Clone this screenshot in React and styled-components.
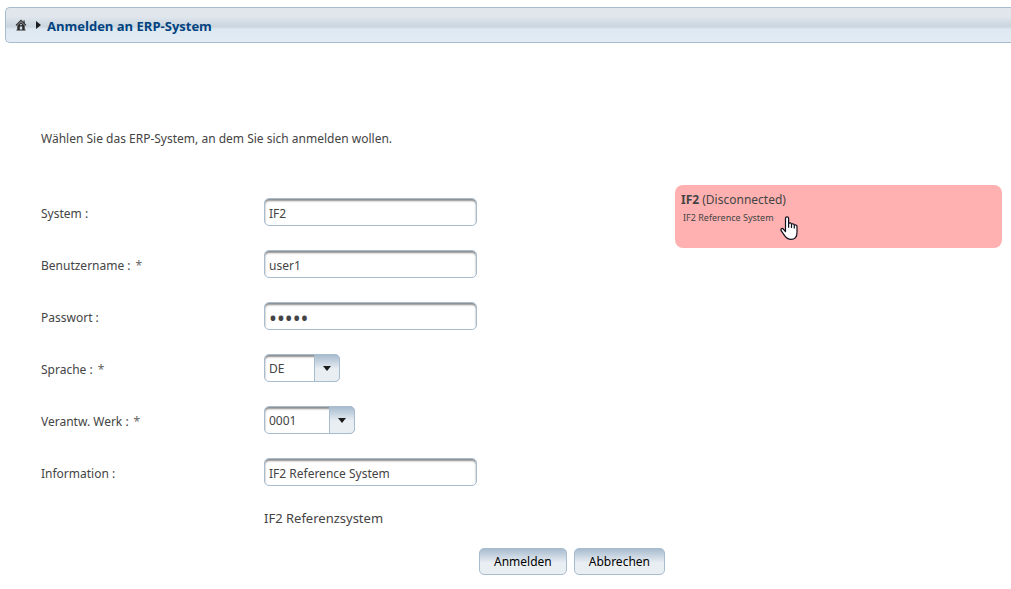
import React from 'react';
import styled, { createGlobalStyle, css } from 'styled-components';

const GlobalStyle = createGlobalStyle`
  *, *::before, *::after {
    box-sizing: border-box;
  }
  body {
    margin: 0;
    background: #ffffff;
    color: #444444;
    font-family: 'Noto Sans', 'Open Sans', sans-serif;
    font-size: 12px;
    line-height: 18px;
  }
  input, select, button {
    font-family: inherit;
    font-size: inherit;
    line-height: inherit;
  }
`;

const Page = styled.div`
  padding: 7px 0 14px 5px;
`;

const Breadcrumb = styled.nav`
  display: flex;
  align-items: center;
  height: 36px;
  padding: 0 9px;
  border: 1px solid #a8bccf;
  border-right: 0;
  border-radius: 5px 0 0 5px;
  background: linear-gradient(to bottom, #e2e7ee 0%, #e0e6ec 25%, #c9d5df 55%, #dde8f1 62%, #e3ecf5 100%);
`;

const HomeLink = styled.a`
  display: flex;
  margin-right: 9px;
`;

const Crumb = styled.h1`
  margin: 0 0 0 6px;
  padding-top: 2px;
  color: #00427f;
  font-family: 'Open Sans', sans-serif;
  font-size: 13px;
  line-height: 18px;
  font-weight: 700;
`;

const Content = styled.main`
  padding: 87px 9px 0 36px;
`;

const Intro = styled.p`
  margin: 0 0 37px;
`;

const Columns = styled.div`
  display: grid;
  grid-template-columns: minmax(0, 624fr) minmax(0, 327fr);
  gap: 10px;
  align-items: start;
`;

const Form = styled.form`
  display: flex;
  flex-direction: column;
  gap: 24px;
  padding-top: 13px;
`;

const Row = styled.div`
  display: grid;
  grid-template-columns: 223px 1fr;
  align-items: center;
  justify-items: start;
`;

const Label = styled.label`
  padding-top: 4px;
`;

const Required = styled.span`
  margin-left: 5px;
  color: #666666;
`;

const fieldBox = css`
  height: 28px;
  margin: 0;
  padding: 2px 4px 0;
  border: 1px solid #a8bccf;
  border-radius: 5px;
  outline: 0;
  background: #ffffff;
  color: #444444;
  box-shadow: inset 0 2px 2px #8c8c8c;
`;

const Input = styled.input`
  ${fieldBox}
  width: 213px;

  &[type='password'] {
    padding-top: 4px;
    font-size: 21px;
  }
`;

const SelectBox = styled.div`
  display: grid;
  width: ${({ $width }) => $width}px;
`;

const Select = styled.select`
  ${fieldBox}
  grid-area: 1 / 1;
  width: 100%;
  padding-right: 28px;
  appearance: none;
`;

const Trigger = styled.span`
  grid-area: 1 / 1;
  justify-self: end;
  display: flex;
  align-items: center;
  justify-content: center;
  width: 26px;
  height: 28px;
  border: 1px solid #a8bccf;
  border-radius: 0 5px 5px 0;
  background: linear-gradient(to bottom, #a8bccf 0%, #e9eef3 55%, #e9eef3 100%);
  pointer-events: none;
`;

const Note = styled.p`
  margin: -1px 0 1px 223px;
  font-size: 13px;
`;

const Actions = styled.div`
  display: flex;
  justify-content: flex-end;
  gap: 7px;
  margin-top: -4px;
`;

const Button = styled.button`
  height: 27px;
  padding: 1px 14px 0;
  border: 1px solid #a8bccf;
  border-radius: 5px;
  background: linear-gradient(to bottom, #a8bccf 0%, #e9eef3 55%, #e9eef3 100%);
  color: #000000;
  cursor: pointer;
`;

const SystemCard = styled.section`
  position: relative;
  height: 63px;
  padding: 6px;
  border-radius: 8px;
  background: #ffb1b1;
`;

const SystemName = styled.h2`
  margin: 0;
  font-size: 12px;
  line-height: 18px;
  font-weight: 400;
`;

const SystemText = styled.p`
  margin: 0;
  padding-left: 2px;
  font-size: 9px;
  line-height: 18px;
`;

const Pointer = styled.svg`
  position: absolute;
  top: 31px;
  left: 105px;
`;

const HomeIcon = () => (
  <svg width="12" height="12" viewBox="0 0 12 12" aria-hidden="true">
    <path d="M1 6.4 6 1.4 11 6.4" fill="none" stroke="#2b2b2b" strokeWidth="1.3" />
    <path d="M8.4 1.5h1.3v3.2L8.4 3.4z" fill="#2b2b2b" />
    <path d="M2.3 6.6 6 3l3.7 3.6V11H7.2V7.6H4.8V11H2.3z" fill="#2b2b2b" />
    <path d="M5.2 5.1h1.6v1.2H5.2z" fill="#c9d2db" />
    <path d="M1.5 11h9" stroke="#2b2b2b" />
  </svg>
);

const HandPointer = () => (
  <Pointer width="18" height="25" viewBox="0 0 18 25" aria-hidden="true">
    <path
      d="M5.5 15.6V2.3C5.5 .3 8.6 .3 8.6 2.3V7.6C9.3 6.4 11.4 6.7 11.5 8.3C12.3 7.3 14.2 7.7 14.3 9.2C15.2 8.4 17 8.9 17 10.6V16.5C17 20.8 14.6 23.4 10.9 23.4C7.6 23.4 6.2 22 4.6 19.7L1.3 14.8C.2 13.1 2 11.8 3.3 13Z"
      fill="#ffffff"
      stroke="#10101c"
      strokeWidth="1.2"
      strokeLinejoin="round"
    />
    <path d="M8.6 7.4v4.4M11.5 8.2v3.8M14.3 9.2V12.4" fill="none" stroke="#10101c" strokeWidth="1.2" />
  </Pointer>
);

const FieldLabel = ({ id, text, required }) => (
  <Label htmlFor={id}>
    {text} :{required && <Required>*</Required>}
  </Label>
);

const TextField = ({ id, label, required, type = 'text', value }) => (
  <Row>
    <FieldLabel id={id} text={label} required={required} />
    <Input id={id} type={type} defaultValue={value} />
  </Row>
);

const SelectField = ({ id, label, required, value, width }) => (
  <Row>
    <FieldLabel id={id} text={label} required={required} />
    <SelectBox $width={width}>
      <Select id={id} defaultValue={value}>
        <option value={value}>{value}</option>
      </Select>
      <Trigger>
        <svg width="8" height="5" viewBox="0 0 8 5" aria-hidden="true">
          <path d="M0 0h8L4 5z" fill="#1c1c1c" />
        </svg>
      </Trigger>
    </SelectBox>
  </Row>
);

const App = () => {
  return (
    <>
      <GlobalStyle />
      <Page>
        <Breadcrumb>
          <HomeLink href="#" aria-label="Home">
            <HomeIcon />
          </HomeLink>
          <svg width="5" height="8" viewBox="0 0 5 8" aria-hidden="true">
            <path d="M0 0l5 4-5 4z" fill="#1c1c1c" />
          </svg>
          <Crumb>Anmelden an ERP-System</Crumb>
        </Breadcrumb>
        <Content>
          <Intro>Wählen Sie das ERP-System, an dem Sie sich anmelden wollen.</Intro>
          <Columns>
            <Form onSubmit={(e) => e.preventDefault()}>
              <TextField id="system" label="System" value="IF2" />
              <TextField id="user" label="Benutzername" required value="user1" />
              <TextField id="password" label="Passwort" type="password" value="user1" />
              <SelectField id="language" label="Sprache" required value="DE" width={76} />
              <SelectField id="plant" label="Verantw. Werk" required value="0001" width={91} />
              <TextField id="info" label="Information" value="IF2 Reference System" />
              <Note>IF2 Referenzsystem</Note>
              <Actions>
                <Button type="submit">Anmelden</Button>
                <Button type="button">Abbrechen</Button>
              </Actions>
            </Form>
            <SystemCard>
              <SystemName>
                <b>IF2</b> (Disconnected)
              </SystemName>
              <SystemText>IF2 Reference System</SystemText>
              <HandPointer />
            </SystemCard>
          </Columns>
        </Content>
      </Page>
    </>
  );
};

export default App;
